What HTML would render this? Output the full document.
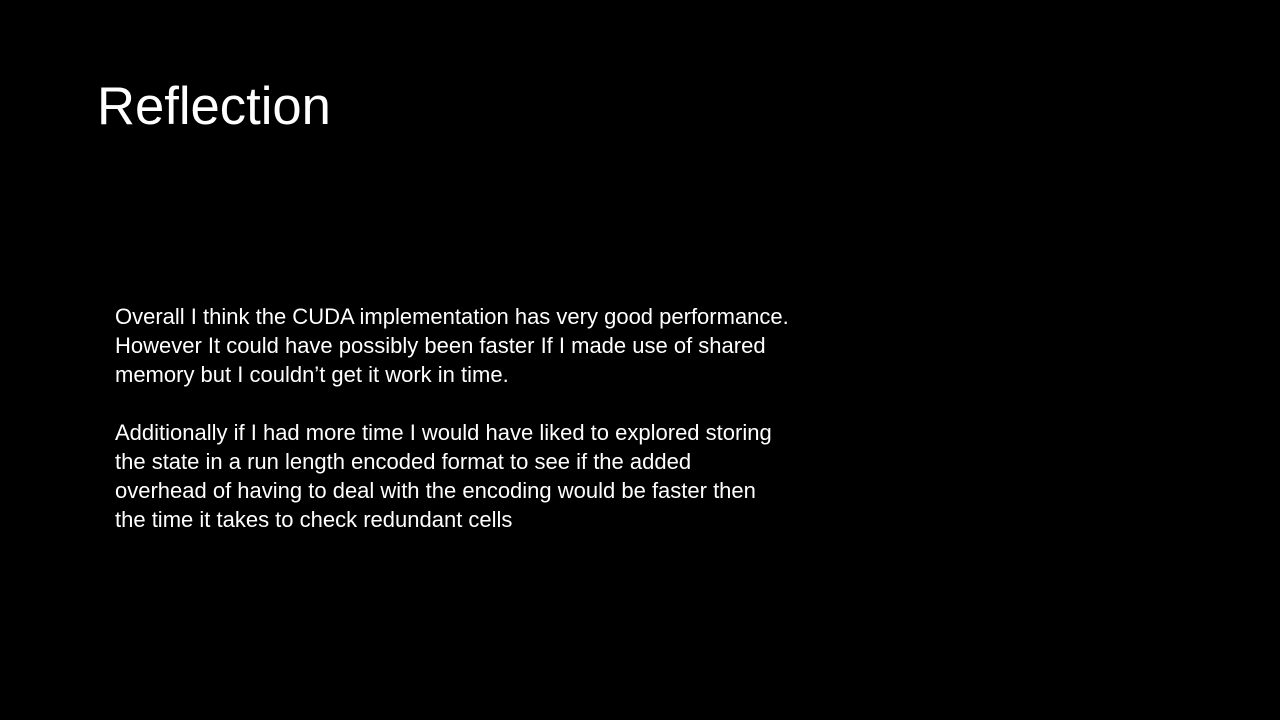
<!DOCTYPE html>
<html><head><meta charset="utf-8"><style>
html,body{margin:0;padding:0;background:#000;width:1280px;height:720px;overflow:hidden}
body{position:relative;font-family:"Liberation Sans",sans-serif;color:#fff}
.t{position:absolute;left:97px;top:72px;font-size:52.6px;line-height:70px;white-space:nowrap}
.b{position:absolute;left:115px;top:302px;font-size:22px;line-height:29px;white-space:nowrap}
</style></head><body>
<div class="t">Reflection</div>
<div class="b">Overall I think the CUDA implementation has very good performance.<br>However It could have possibly been faster If I made use of shared<br>memory but I couldn’t get it work in time.<br><br>Additionally if I had more time I would have liked to explored storing<br>the state in a run length encoded format to see if the added<br>overhead of having to deal with the encoding would be faster then<br>the time it takes to check redundant cells</div>
</body></html>
